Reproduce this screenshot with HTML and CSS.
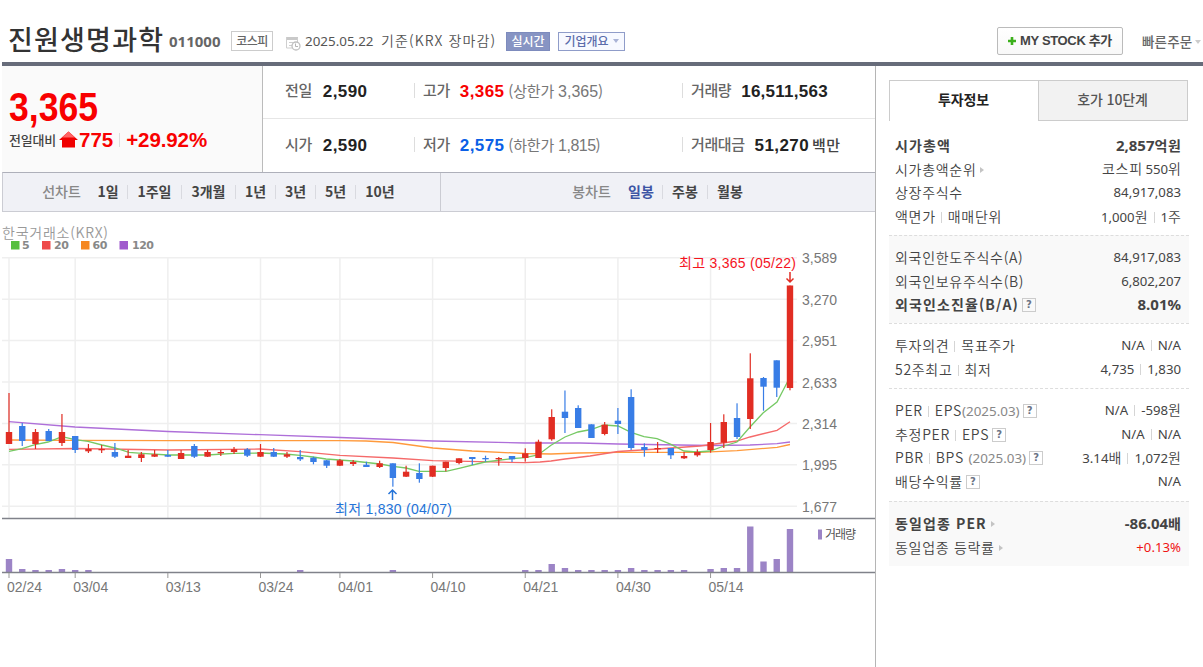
FILE: index.html
```html
<!DOCTYPE html>
<html lang="ko">
<head>
  <meta charset="UTF-8">
  <title>진원생명과학 011000</title>
  <link rel="stylesheet" href="styles.css">
</head>
<body>
  <header class="header">
    <h1 class="name">진원생명과학</h1>
    <span class="code">011000</span>
    <span class="market">코스피</span>
    <svg class="clock" width="16" height="15" viewBox="0 0 16 15">
      <path d="M1 1h12v3H1z" fill="#c9c9c9"/>
      <path d="M1.5 1v11h6M4 6.5h5M4 9.5h3M12.500 2v4" fill="none" stroke="#cfcfcf"/>
      <circle cx="11" cy="10" r="4" fill="#fff" stroke="#c0c0c0" stroke-width="1.300"/>
      <path d="M10.500 7.500v3h2.500" fill="none" stroke="#b5b5b5"/>
    </svg>
    <span class="date">2025.05.22</span>
    <span class="basis">기준(KRX 장마감)</span>
    <a class="btn-live">실시간</a>
    <a class="btn-info">기업개요<i class="arrow-down"></i></a>
    <a class="btn-mystock"><svg width="8" height="8" viewBox="0 0 8 8"><path d="M4 0v8M0 4h8" stroke="#3cb01c" stroke-width="2.600"/></svg>MY STOCK 추가</a>
    <a class="quick">빠른주문<i class="arrow-down"></i></a>
  </header>

  <div class="content">
    <main class="main">
      <div class="rate">
        <div class="today">
          <strong class="price">3,365</strong>
          <div class="change">
            <span class="change-label">전일대비</span>
            <svg width="19" height="17" viewBox="0 0 19 17">
              <path d="M9.500 .5L19 9H16v7.500H3V9H0z" fill="#f00000"/>
              <path d="M9.500 .5L16 6.500H3z" fill="#ff6464"/>
            </svg>
            <strong class="diff">775</strong>
            <strong class="percent">+29.92%</strong>
          </div>
        </div>
        <div class="quotes">
          <dl class="quote"><dt>전일</dt><dd>2,590</dd></dl>
          <dl class="quote split"><dt>고가</dt><dd class="up">3,365</dd><dd class="limit">(상한가 <em>3,365</em>)</dd></dl>
          <dl class="quote split wide"><dt>거래량</dt><dd class="volume">16,511,563</dd></dl>
          <dl class="quote"><dt>시가</dt><dd>2,590</dd></dl>
          <dl class="quote split"><dt>저가</dt><dd class="down">2,575</dd><dd class="limit">(하한가 <em class="narrow">1,815</em>)</dd></dl>
          <dl class="quote split wide"><dt>거래대금</dt><dd>51,270</dd><dd class="unit">백만</dd></dl>
        </div>
      </div>

      <nav class="period">
        <ul class="line-menu">
          <li class="title">선차트</li>
          <li class="first">1일</li><li>1주일</li><li>3개월</li><li>1년</li><li>3년</li><li>5년</li><li>10년</li>
        </ul>
        <ul class="candle-menu">
          <li class="title">봉차트</li>
          <li class="first on">일봉</li><li>주봉</li><li>월봉</li>
        </ul>
      </nav>

      <svg class="chart" width="875" height="455" viewBox="0 212 875 455">
        <text class="exchange" x="2" y="238" textLength="106">한국거래소(KRX)</text>
        <g class="legend">
          <rect x="11" y="241" width="8.500" height="8.500" fill="#56bf3f"/><text x="22" y="249">5</text>
          <rect x="42" y="241" width="8.500" height="8.500" fill="#ee4a4a"/><text x="54" y="249" textLength="15">20</text>
          <rect x="81" y="241" width="8.500" height="8.500" fill="#f5871f"/><text x="92.500" y="249" textLength="15">60</text>
          <rect x="119.500" y="241" width="8.500" height="8.500" fill="#a05acd"/><text x="132" y="249" textLength="22">120</text>
        </g>
        <g id="grid"></g>
        <g id="averages">
          <polyline stroke="#ff9a3c" points="9,440 75,440.3 168,440.7 260,440.7 340,440.7 366,441 393,442.5 433,448 472,451 525,453.5 551,454 578,453 618,452.3 700,452.3 737,450.7 777,447.3 790,444.5"/>
          <polyline stroke="#ae6fd9" points="9,421.7 75,427 168,431.5 260,434.7 340,437.5 433,441 525,443 580,443 618,444 710,445.5 750,445 777,443.7 790,442"/>
          <polyline stroke="#f56a6a" points="9,449.3 75,448.5 168,450 260,449 300,451.7 340,455.3 393,458 433,460.7 480,461.7 525,462.7 540,462 551,461 565,459 590,456 618,451.5 657,449 700,446 737,441 750,437 777,430.3 790,421.7"/>
          <polyline stroke="#76c964" points="9,451.3 22,448.7 35,444.7 48,442 62,436.7 75,439.7 88,441.3 102,445 115,448 129,452.3 142,453.3 168,455 207,455 234,453.3 260,453 285,454 300,455.3 313,457 326,459 353,461 380,464 393,466.3 406,468 419,471.3 446,471.3 459,468.3 485,462 512,458.7 525,457.7 538,455 551,445.3 565,437 578,432 591,429.5 604,425 618,426 631,432.3 644,436.7 657,438.7 671,444.3 684,451 697,452 710,451 724,446 737,442 750,427 763,413 777,402 790,377"/>
        </g>
        <g id="candles"></g>
        <g class="high-mark">
          <path d="M790 272v10M786.500 278.500l3.500 3.500l3.500-3.500"/>
          <text x="679" y="268" textLength="117">최고 3,365 (05/22)</text>
        </g>
        <g class="low-mark">
          <path d="M392.500 500v-10M388.500 494l4-4l4 4"/>
          <text x="335" y="514" textLength="117">최저 1,830 (04/07)</text>
        </g>
        <g id="volumes"></g>
        <path class="axis" d="M2 518.500H875M2 572.500H875"/>
        <rect x="818" y="529.500" width="4" height="10" fill="#9c84c6"/>
        <text class="volume-label" x="825" y="539" textLength="31">거래량</text>
        <g id="labels"></g>
      </svg>
    </main>

    <aside class="aside">
      <ul class="tabs">
        <li class="tab on">투자정보</li>
        <li class="tab">호가 10단계</li>
      </ul>
      <section class="group cap">
        <div class="row strong"><span>시가총액</span><b>2,857<u>억원</u></b></div>
        <div class="row"><span>시가총액순위<i class="arrow"></i></span><b><u>코스피</u> 550<u>위</u></b></div>
        <div class="row"><span>상장주식수</span><b>84,917,083</b></div>
        <div class="row"><span>액면가<i class="bar"></i>매매단위</span><b>1,000<u>원</u><i class="bar"></i>1<u>주</u></b></div>
      </section>
      <section class="group foreign gray">
        <div class="row"><span>외국인한도주식수(A)</span><b>84,917,083</b></div>
        <div class="row"><span>외국인보유주식수(B)</span><b>6,802,207</b></div>
        <div class="row strong"><span>외국인소진율(B/A)<i class="help">?</i></span><b>8.01%</b></div>
      </section>
      <section class="group opinion">
        <div class="row"><span>투자의견<i class="bar"></i>목표주가</span><b>N/A<i class="bar"></i>N/A</b></div>
        <div class="row"><span>52주최고<i class="bar"></i>최저</span><b>4,735<i class="bar"></i>1,830</b></div>
      </section>
      <section class="group per">
        <div class="row"><span>PER<i class="bar"></i>EPS<em>(2025.03)</em><i class="help">?</i></span><b>N/A<i class="bar"></i>-598<u>원</u></b></div>
        <div class="row"><span>추정PER<i class="bar"></i>EPS<i class="help">?</i></span><b>N/A<i class="bar"></i>N/A</b></div>
        <div class="row"><span>PBR<i class="bar"></i>BPS <em>(2025.03)</em><i class="help">?</i></span><b>3.14<u>배</u><i class="bar"></i>1,072<u>원</u></b></div>
        <div class="row"><span>배당수익률<i class="help">?</i></span><b>N/A</b></div>
      </section>
      <section class="group sector gray">
        <div class="row strong"><span>동일업종 PER<i class="arrow"></i></span><b>-86.04<u>배</u></b></div>
        <div class="row"><span>동일업종 등락률<i class="arrow"></i></span><b class="plus">+0.13%</b></div>
      </section>
    </aside>
  </div>
  <script src="chart.js"></script>
</body>
</html>
```

FILE: styles.css
```css
* {
  box-sizing: border-box;
  margin: 0;
  padding: 0;
}

body {
  width: 1203px;
  height: 667px;
  overflow: hidden;
  background: #fff;
  color: #444;
  font-family: "Noto Sans", "Noto Sans CJK KR", sans-serif;
  font-size: 13px;
}

ul { list-style: none; }
i, em { font-style: normal; }
u { text-decoration: none; }

/* header */
.header {
  display: flex;
  align-items: center;
  height: 66px;
  margin-left: 2px;
  padding: 20px 0 0 6px;
  border-bottom: 4px solid #676c7a;
  white-space: nowrap;
}

.header > * { flex: none; }

.name {
  width: 161px;
  margin-top: -5px;
  color: #333;
  font: 500 27px/40px "Noto Sans CJK KR", sans-serif;
  letter-spacing: 1.2px;
}

.code {
  width: 62px;
  color: #666;
  font-size: 15px;
  font-weight: 700;
}

.market {
  width: 42px;
  height: 20px;
  margin-top: -1px;
  border: 1px solid #ccc;
  color: #666;
  font: 500 12px/17px "Noto Sans CJK KR", sans-serif;
  letter-spacing: -0.5px;
  text-align: center;
}

.clock { margin: 4px 4px 0 12px; }

.date {
  width: 76px;
  margin-top: -1px;
  color: #555;
  font-size: 13.400px;
}

.basis {
  width: 125px;
  margin-top: -2px;
  color: #555;
  font: 350 14px/20px "Noto Sans CJK KR", sans-serif;
  letter-spacing: 1.100px;
}

.btn-live, .btn-info {
  height: 19px;
  border: 1px solid #7d8bbd;
  font: 500 12px/16px "Noto Sans CJK KR", sans-serif;
  text-align: center;
}

.btn-live {
  width: 44px;
  background: #8794c3;
  color: #fff;
}

.btn-info {
  width: 67px;
  margin-left: 8px;
  border-color: #8f9cc9;
  background: #f7f9ff;
  color: #5b6cab;
}

.arrow-down {
  display: inline-block;
  margin-left: 4px;
  border: 3.500px solid transparent;
  border-top: 4px solid #a9b3d6;
  border-bottom: 0;
  vertical-align: 3px;
}

.btn-mystock {
  width: 126px;
  height: 28px;
  margin-left: 372px;
  border: 1px solid #bbb;
  border-radius: 2px;
  background: linear-gradient(#fff, #f8f8f8);
  color: #444;
  font: 700 13px/26px "Liberation Sans", "Noto Sans CJK KR", sans-serif;
  letter-spacing: -0.35px;
  text-align: center;
}

.btn-mystock svg { margin-right: 4px; }

.quick {
  margin-left: 19px;
  color: #666;
  font: 500 13.500px/20px "Noto Sans CJK KR", sans-serif;
  letter-spacing: 0.2px;
}

.quick .arrow-down {
  margin-left: 3px;
  border-top-color: #ccc;
}

/* two columns */
.content { display: flex; }

.main {
  width: 876px;
  height: 601px;
  border-right: 1px solid #b5b5b5;
}

/* price summary */
.rate {
  display: flex;
  height: 106px;
  margin-left: 2px;
}

.today {
  width: 261px;
  padding: 20px 0 0 7px;
  border-right: 1px solid #bbb;
  background: #fafafa;
  color: #f80000;
  font-family: "Liberation Sans", sans-serif;
}

.price {
  display: block;
  font-size: 40px;
  line-height: 42px;
  transform: scaleX(0.89);
  transform-origin: 0 0;
}

.change {
  display: flex;
  align-items: center;
  height: 23px;
  font-size: 20.500px;
}

.change-label {
  width: 50px;
  color: #444;
  font: 500 13px/20px "Noto Sans CJK KR", sans-serif;
  letter-spacing: -0.2px;
}

.diff { margin-left: 1px; }

.percent {
  margin-left: 6px;
  padding-left: 6px;
  border-left: 1px solid #ddd;
  line-height: 14px;
  letter-spacing: -0.1px;
}

.quotes {
  display: grid;
  flex: 1;
  grid-template-columns: 151px 268px 193px;
  grid-template-rows: 53px 53px;
}

.quote {
  display: flex;
  align-items: center;
  padding: 0 0 1px 22px;
  border-bottom: 1px solid #e6e6e6;
  white-space: nowrap;
}

.quote:nth-child(n+4) {
  padding: 0 0 0 22px;
  border-bottom: 0;
}

.quote.split { padding-left: 0; }

.split dt {
  padding-left: 8px;
  border-left: 1px solid #ddd;
}

.quote dt, .unit {
  color: #666;
  font: 500 15px/13px "Noto Sans CJK KR", sans-serif;
  letter-spacing: -0.4px;
}

.quote dt {
  height: 15px;
  margin-top: -2px;
}

.quote dd {
  margin-left: 11px;
  color: #222;
  font: 700 17px/20px "Liberation Sans", sans-serif;
  letter-spacing: 0.4px;
}

.quote .up { color: #f80000; }
.quote .down { color: #0a5fe6; }
.split dd { margin-left: 10px; }

.quote .volume { letter-spacing: 0.25px; }

.quote .limit {
  margin: -2px 0 0 4px;
  color: #777;
  font: 400 15px/20px "Noto Sans CJK KR", sans-serif;
  letter-spacing: -0.2px;
}

.limit em {
  font: 16px "Liberation Sans", sans-serif;
  letter-spacing: 0;
}

.limit .narrow { letter-spacing: -0.5px; }

.quote .unit {
  margin: -2px 0 0 3px;
  color: #444;
  font: 500 15px/20px "Noto Sans CJK KR", sans-serif;
}

/* chart period menu */
.period {
  display: flex;
  height: 40px;
  margin-left: 2px;
  border: 1px solid #cbccd3;
  border-top-color: #aeb0ba;
  border-right: 0;
  background: #f0f1f6;
}

.period ul { display: grid; }

.line-menu {
  width: 438px;
  padding-left: 31px;
  grid-template-columns: 54px 39px 54px 54px 40px 40px 40px 49px;
  border-right: 1px solid #cbccd3;
}

.candle-menu {
  padding-left: 122px;
  grid-template-columns: 56px 43px 45px 45px;
}

.period li {
  align-self: center;
  height: 14px;
  border-left: 1px solid #d9dae0;
  color: #444;
  font: 700 14px/13px "Noto Sans CJK KR", sans-serif;
  text-align: center;
  white-space: nowrap;
}

.period .title, .period .first { border-left-color: transparent; }

.period .title {
  color: #888;
  font-weight: 500;
}

.period .on { color: #3d55a5; }

/* chart */
.chart { display: block; }

.chart text {
  fill: #777;
  font: 14px "Liberation Sans", "Noto Sans CJK KR", sans-serif;
}

.chart .exchange {
  fill: #999;
  font: 350 14px "Noto Sans CJK KR", sans-serif;
}

.chart .legend text {
  fill: #888;
  font: 700 11px "DejaVu Sans", sans-serif;
}

#grid {
  stroke: #efefef;
  stroke-width: 1.500;
}

#averages {
  fill: none;
  stroke-width: 1.300;
}

.high-mark path, .low-mark path {
  fill: none;
  stroke: #e12d23;
  stroke-width: 1.500;
}

.low-mark path { stroke: #2473d8; }
.chart .high-mark text { fill: #f5141e; }
.chart .low-mark text { fill: #2473d8; }

.axis {
  stroke: #80828a;
  stroke-width: 1.400;
}

.chart .volume-label {
  fill: #555;
  font-size: 12px;
}

/* side panel */
.aside {
  width: 300px;
  margin: 14px 0 0 13px;
}

.tabs {
  display: flex;
  width: 299px;
  height: 41px;
}

.tab {
  width: 150px;
  padding-right: 1px;
  border: 1px solid #ccc;
  background: #f2f2f2;
  color: #555;
  font: 500 14px/37px "Noto Sans CJK KR", sans-serif;
  letter-spacing: -0.1px;
  text-align: center;
}

.tab.on {
  width: 149px;
  border-right: 0;
  border-bottom: 0;
  background: #fff;
  color: #222;
  font-weight: 700;
}

.group {
  padding: 9px 8px 0 6px;
  border-top: 1px dashed #ddd;
}

.group.gray { background: #f9f9f9; }

.cap {
  height: 114px;
  padding-top: 12px;
  border-top: 0;
}

.foreign { height: 88px; }
.opinion { height: 65px; }
.per { height: 113px; }
.sector { height: 65px; }

.row {
  display: flex;
  align-items: center;
  justify-content: space-between;
  height: 23.800px;
  white-space: nowrap;
}

.row span, .row u {
  font: 350 14px/20px "Noto Sans CJK KR", sans-serif;
  letter-spacing: 0.7px;
}

.row u { margin-right: -0.7px; }

.row b {
  font-size: 13.200px;
  font-weight: 400;
  line-height: 20px;
}

.strong span, .strong u, .strong b { font-weight: 700; }
.strong span { letter-spacing: 1.100px; }
.strong b { font-size: 15px; }

.row em {
  color: #888;
  font: 13.400px "Noto Sans", sans-serif;
  letter-spacing: 0;
}

.row .plus { color: #f01414; }

.bar {
  display: inline-block;
  width: 1px;
  height: 11px;
  margin: 0 6px 0 5px;
  background: #d5d5d5;
  vertical-align: -1px;
}

.row b .bar { margin: 0 6px; }

.arrow {
  display: inline-block;
  margin-left: 4px;
  border: 3px solid transparent;
  border-left: 4px solid #c4c4c4;
  border-right: 0;
  vertical-align: 2px;
}

.help {
  display: inline-block;
  width: 14px;
  height: 14px;
  margin-left: 3px;
  border: 1px solid #ccc;
  color: #6b7385;
  font: 700 10px/12px "DejaVu Sans", sans-serif;
  letter-spacing: 0;
  text-align: center;
  vertical-align: 2px;
}
```

FILE: chart.js
```js
const STEP = 13.237;
const START = 9;

// direction, high, body top, body bottom, low
const candles = [
  ['r', 393, 432, 444, 444], ['b', 423, 426, 441, 446], ['r', 429, 432, 444, 449], ['b', 429, 431, 441, 441],
  ['r', 414, 432, 443, 446], ['b', 436, 436, 450, 453], ['r', 444, 449, 451.3, 453], ['r', 445, 449, 450, 453],
  ['b', 443, 452, 456.7, 458], ['r', 450, 455.7, 458, 458], ['r', 452, 454.3, 458, 462], ['r', 450, 454.3, 456.7, 457],
  ['b', 450, 455, 456.7, 457], ['r', 450, 453, 459, 459], ['b', 444, 446, 456.7, 458], ['r', 450, 452, 456.7, 457],
  ['r', 450, 452, 453, 456], ['r', 447, 449.3, 452, 454], ['b', 448, 449.3, 455.7, 457], ['r', 444, 452, 456.7, 457],
  ['b', 448, 452, 456.7, 457], ['r', 452, 454.3, 456.7, 458], ['b', 450, 457, 459.3, 461], ['b', 456.7, 457.7, 462, 464.3],
  ['b', 460, 460.3, 465.7, 468], ['r', 459, 460.3, 465.7, 466], ['r', 460, 462, 464, 466], ['b', 461.7, 464.7, 467, 467],
  ['r', 460.7, 463.3, 467, 468], ['b', 463.3, 463.3, 478, 486.7], ['r', 465.7, 471.7, 476.7, 477], ['b', 463.3, 473, 479, 482.7],
  ['r', 465.7, 465.7, 476.7, 477], ['r', 461.7, 461.7, 468, 471.3], ['r', 458.3, 458.3, 463, 464.3], ['b', 457, 457, 459, 465],
  ['b', 455.7, 458, 459, 461.7], ['r', 457, 458, 459, 465.7], ['b', 456, 456, 459.3, 462], ['r', 448.3, 453.3, 458, 461.7],
  ['r', 439.7, 441.7, 458, 458], ['r', 409.3, 417, 439.3, 440.7], ['b', 390.5, 411.7, 418, 433], ['b', 405.3, 408, 428, 428],
  ['b', 424.3, 424.3, 438, 438], ['r', 422, 424.7, 434, 435.3], ['b', 408, 420.7, 424, 434], ['b', 389.3, 397, 448, 450],
  ['b', 443.3, 447, 450, 456.7], ['r', 442, 448, 449, 453], ['b', 448, 448, 455.3, 459], ['r', 452, 456, 458.3, 459],
  ['r', 449.3, 452, 455.3, 456.7], ['r', 423, 442, 450, 452.7], ['r', 414.3, 422, 442.7, 448], ['b', 403.3, 418, 437, 439],
  ['r', 353.3, 378.3, 419, 429], ['b', 377, 378, 386.7, 410.7], ['b', 360.3, 360.3, 387.7, 397], ['r', 285.5, 285.5, 388, 390.3]
];

// bar heights by day index
const volumes = {
  0: 13, 1: 3, 2: 2, 3: 2, 4: 3, 5: 2, 6: 2, 22: 2, 29: 2, 39: 2, 40: 2, 41: 8, 42: 4, 43: 2, 44: 2, 45: 2,
  46: 2, 47: 4, 48: 2, 49: 2, 50: 2, 51: 2, 53: 3, 54: 4, 55: 4, 56: 45.5, 57: 10.5, 58: 13, 59: 43
};

const dates = [
  [0, '02/24'], [5, '03/04'], [12, '03/13'], [19, '03/24'], [25, '04/01'],
  [32, '04/10'], [39, '04/21'], [46, '04/30'], [53, '05/14']
];
const prices = ['3,589', '3,270', '2,951', '2,633', '2,314', '1,995', '1,677'];

const dayX = (i) => START + i * STEP;
let grid = '';
let labels = '';
let bars = '';

prices.forEach((p, i) => {
  const y = 257.8 + i * 41.4;
  grid += `<path d="M2 ${y}H797"/>`;
  labels += `<text x="802" y="${y + 5.5}" textLength="35">${p}</text>`;
});

dates.forEach(([i, d]) => {
  const x = dayX(i);
  grid += `<path d="M${x} 257V518"/>`;
  labels += `<path d="M${x} 573v5" stroke="#999"/><text x="${x - 2}" y="592" textLength="35">${d}</text>`;
});

document.getElementById('candles').innerHTML = candles.map(([dir, high, top, bottom, low], i) => {
  const x = dayX(i);
  const color = dir === 'r' ? '#e12d23' : '#387de6';
  return `<rect x="${x - 0.6}" y="${high}" width="1.2" height="${low - high}" fill="${color}"/>` +
    `<rect x="${x - 3.2}" y="${top}" width="6.4" height="${Math.max(bottom - top, 1.3)}" fill="${color}"/>`;
}).join('');

Object.entries(volumes).forEach(([i, h]) => {
  bars += `<rect x="${dayX(i) - 3.2}" y="${572 - h}" width="6.4" height="${h}" fill="#9c84c6"/>`;
});

document.getElementById('grid').innerHTML = grid;
document.getElementById('labels').innerHTML = labels;
document.getElementById('volumes').innerHTML = bars;
```
